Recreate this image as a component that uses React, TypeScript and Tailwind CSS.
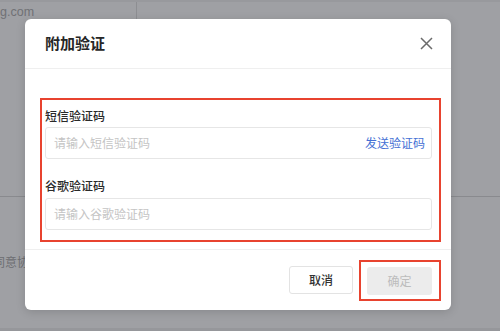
import React from "react";

const cjk = { fontFamily: '"Noto Sans CJK SC", "Noto Sans", sans-serif' };

export default function App() {
  return (
    <div className="relative h-[331px] w-[500px] overflow-hidden bg-white" style={cjk}>
      {/* underlying page */}
      <div className="flex h-full flex-col">
        <div className="flex h-[22px] border-t-[2px] border-[#f4f4f4]">
          <div className="flex w-[137px] items-center border-r border-[#e2e2e2]">
            <span className="text-[12.5px] leading-none text-[#b4b4b4]" style={{ fontFamily: '"Liberation Sans", sans-serif' }}>
              g.com
            </span>
          </div>
        </div>
        <div className="mt-[174px] border-t border-[#dcdcdc]" />
        <div className="ml-[-7px] mt-[58px] text-[12px] leading-[14px] text-[#b0b0b0]">同意协议</div>
        <div className="mt-auto h-[3px] bg-[#f0f0f0]" />
      </div>

      {/* overlay */}
      <div className="absolute inset-0 bg-[#00020c]/[0.375] pl-[25px] pt-[19px]">
        <div className="flex h-[291px] w-[426px] flex-col rounded-[6px] bg-white shadow-[0_2px_10px_rgba(0,0,0,0.15)]">
          {/* header */}
          <div className="flex h-[50px] items-center justify-between border-b border-[#efefef] pl-[20px] pr-[18px]">
            <span className="text-[15px] font-semibold text-[#262626]">附加验证</span>
            <svg width="13" height="13" viewBox="0 0 13 13" fill="none" stroke="#6b6b6b" strokeWidth="1.5">
              <path d="M1 1L12 12M12 1L1 12" />
            </svg>
          </div>
          {/* body */}
          <div className="border-b border-[#efefef] pb-[7px] pl-[15px] pr-[10px] pt-[29px]">
            <div className="border-[2px] border-[#e8432f] pb-[10px] pl-[3px] pr-[7px] pt-[7px]">
              <div className="text-[12px] font-medium leading-[18px] text-[#2a2a2a]">短信验证码</div>
              <div className="mt-[2px] flex h-[32px] items-center justify-between rounded-[3px] border border-[#e6e6e6] pl-[8px] pr-[6px]">
                <span className="text-[12px] text-[#c4c4c4]">请输入短信验证码</span>
                <span className="text-[12px] text-[#4470d4]">发送验证码</span>
              </div>
              <div className="mt-[18px] text-[12px] font-medium leading-[18px] text-[#2a2a2a]">谷歌验证码</div>
              <div className="mt-[3px] flex h-[32px] items-center rounded-[3px] border border-[#e6e6e6] pl-[8px]">
                <span className="text-[12px] text-[#c4c4c4]">请输入谷歌验证码</span>
              </div>
            </div>
          </div>
          {/* footer */}
          <div className="flex flex-1 items-center justify-end gap-[6px] pr-[10px]">
            <button className="flex h-[28px] w-[64px] items-center justify-center rounded-[3px] border border-[#e3e3e3] bg-white text-[12px] font-medium text-[#333]">
              取消
            </button>
            <div className="border-[2px] border-[#e8432f] pb-[4px] pl-[6px] pr-[7px] pt-[5px]">
              <button className="flex h-[28px] w-[65px] items-center justify-center rounded-[3px] bg-[#ececec] text-[12px] text-[#bcbcbc]">
                确定
              </button>
            </div>
          </div>
        </div>
      </div>
    </div>
  );
}
